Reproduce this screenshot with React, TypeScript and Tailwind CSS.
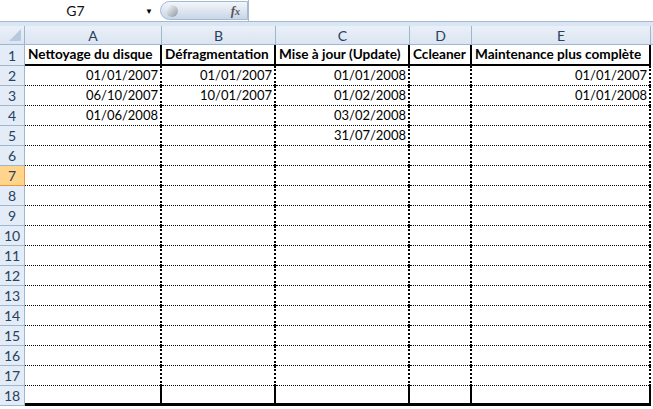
import React from 'react'

const cols = [
  { id: 'A', w: 'w-[137px]' },
  { id: 'B', w: 'w-[114px]' },
  { id: 'C', w: 'w-[134px]' },
  { id: 'D', w: 'w-[62px]' },
  { id: 'E', w: 'w-[179px]' },
]

const headers = ['Nettoyage du disque', 'Défragmentation', 'Mise à jour (Update)', 'Ccleaner', 'Maintenance plus complète']

const data: Record<number, string[]> = {
  2: ['01/01/2007', '01/01/2007', '01/01/2008', '', '01/01/2007'],
  3: ['06/10/2007', '10/01/2007', '01/02/2008', '', '01/01/2008'],
  4: ['01/06/2008', '', '03/02/2008', '', ''],
  5: ['', '', '31/07/2008', '', ''],
}

const rows = Array.from({ length: 17 }, (_, i) => i + 2)

const font = { fontFamily: 'Lato, "Open Sans", sans-serif' }

export default function App() {
  return (
    <div className="w-[653px] h-[409px] overflow-hidden bg-white text-[14px] text-black" style={font}>
      {/* formula bar */}
      <div className="flex h-[22px] bg-white border-b border-[#a5b9d1]">
        <div className="flex w-[157px] items-center">
          <span className="flex-1 pl-[6px] text-center text-[#111]">G7</span>
          <span className="mr-[4px] text-[8px] leading-none">▼</span>
        </div>
        <div className="flex w-[88px] items-center rounded-l-full bg-gradient-to-b from-[#f3f6fa] to-[#c9d6e6] border border-[#a5b9d1] ml-[3px] my-[1px]">
          <span className="ml-[5px] h-[12px] w-[12px] rounded-full bg-gradient-to-br from-white to-[#8d98a5]" />
          <span className="ml-auto mr-[7px] italic font-bold text-[13px] text-[#555]" style={{ fontFamily: '"Liberation Serif", serif' }}>
            f<span className="text-[10px]">x</span>
          </span>
        </div>
        <div className="flex-1 border-l border-[#a5b9d1]" />
      </div>
      <div className="h-[4px] bg-[#dbe6f4]" />

      {/* column headers */}
      <div className="flex h-[19px] bg-gradient-to-b from-[#eaf0f8] to-[#dae4f1]">
        <div className="relative w-[25px] border-r border-b border-[#9eb6ce]">
          <div className="absolute right-[3px] bottom-[3px] h-0 w-0" style={{ borderBottom: '12px solid #b6c9df', borderLeft: '12px solid transparent' }} />
        </div>
        {cols.map(c => (
          <div key={c.id} className={`${c.w} flex items-center justify-center border-r border-b border-[#9eb6ce] text-[#27415f] text-[14px]`}>
            {c.id}
          </div>
        ))}
        <div className="flex-1 border-b border-[#9eb6ce]" />
      </div>

      {/* row 1 */}
      <div className="flex h-[21px]">
        <div className="w-[25px] flex items-center justify-center bg-[#e4ecf7] border-r border-b border-[#9eb6ce] text-[#27415f] text-[14px]">1</div>
        {cols.map((c, i) => (
          <div key={c.id} className={`${c.w} flex items-center border-r-2 border-b-2 border-black pl-[3px] font-bold text-[13.6px] whitespace-nowrap overflow-hidden leading-none`}>
            {headers[i]}
          </div>
        ))}
        <div className="flex-1" />
      </div>

      {rows.map(r => {
        const sel = r === 7
        return (
          <div key={r} className="flex h-[20px]">
            <div
              className={`w-[25px] flex items-center justify-center border-r border-b text-[14px] ${sel ? 'bg-[#ffd58d] border-[#f29536]' : 'bg-[#e4ecf7] border-[#9eb6ce]'} text-[#27415f]`}
            >
              {r}
            </div>
            {cols.map((c, i) => (
              <div
                key={c.id}
                className={`${c.w} flex items-center justify-end border-r-2 border-black pr-[2px] text-[13px] whitespace-nowrap leading-none ${r === 18 ? 'border-b-[3px] border-b-black' : 'border-b border-dotted border-b-black'}`}
              >
                {data[r]?.[i] ?? ''}
              </div>
            ))}
            <div className="flex-1" />
          </div>
        )
      })}
    </div>
  )
}
